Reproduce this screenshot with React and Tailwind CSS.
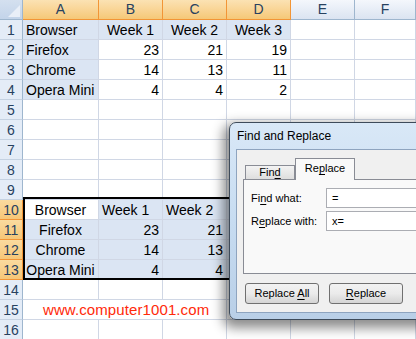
import React from 'react';

// columns A..F, widths live in the grid template below
const COLS = ['A', 'B', 'C', 'D', 'E', 'F'];
const SELECTED_COLS = ['A', 'B', 'C', 'D'];

// each cell: [text, align, highlighted]
const ROWS = [
  { n: 1, cells: [['Browser', 'l', 1], ['Week 1', 'c', 1], ['Week 2', 'c', 1], ['Week 3', 'c', 1]] },
  { n: 2, cells: [['Firefox', 'l', 1], ['23', 'r'], ['21', 'r'], ['19', 'r']] },
  { n: 3, cells: [['Chrome', 'l', 1], ['14', 'r'], ['13', 'r'], ['11', 'r']] },
  { n: 4, cells: [['Opera Mini', 'l', 1], ['4', 'r'], ['4', 'r'], ['2', 'r']] },
  { n: 5, cells: [] },
  { n: 6, cells: [] },
  { n: 7, cells: [] },
  { n: 8, cells: [] },
  { n: 9, cells: [] },
  { n: 10, sel: true, cells: [['Browser', 'c'], ['Week 1', 'l', 1], ['Week 2', 'l', 1], ['Week 3', 'l', 1]] },
  { n: 11, sel: true, cells: [['Firefox', 'c', 1], ['23', 'r', 1], ['21', 'r', 1], ['19', 'r', 1]] },
  { n: 12, sel: true, cells: [['Chrome', 'c', 1], ['14', 'r', 1], ['13', 'r', 1], ['11', 'r', 1]] },
  { n: 13, sel: true, cells: [['Opera Mini', 'c', 1], ['4', 'r', 1], ['4', 'r', 1], ['2', 'r', 1]] },
  { n: 14, cells: [] },
  { n: 15, url: true, cells: [] },
  { n: 16, cells: [] },
];

const alignClass = {
  l: 'justify-start',
  c: 'justify-center',
  r: 'justify-end',
};

const Cell = ({ text, align = 'l', hl }) => (
  <div
    className={`h-[20px] flex items-end px-[3px] pb-[1px] border-r border-b border-[#d0d7e5] text-[14px] leading-[16px] text-black whitespace-nowrap overflow-hidden ${alignClass[align]} ${hl ? 'bg-[#dbe5f3]' : 'bg-white'}`}
  >
    {text}
  </div>
);

const RowHeader = ({ n, sel }) => (
  <div
    className={`h-[20px] flex items-center justify-center border-r border-b text-[14px] leading-[16px] text-[#27415f] ${
      sel
        ? 'bg-gradient-to-b from-[#fadb9f] to-[#f6c677] border-[#f29536]'
        : 'bg-[#e4ecf7] border-r-[#9eb6ce] border-b-[#c5d2e2]'
    }`}
  >
    {n}
  </div>
);

const Sheet = () => (
  <div className="grid grid-cols-[23px_76px_64px_64px_64px_64px_1fr]">
    {/* corner */}
    <div className="h-[20px] relative bg-gradient-to-b from-[#d4e0ef] to-[#c3d4ea] border-r border-b border-[#9eb6ce]">
      <svg className="absolute right-[2px] bottom-[2px]" width="12" height="12" viewBox="0 0 12 12">
        <polygon points="12,0 12,12 0,12" fill="#e9eff8" />
      </svg>
    </div>
    {COLS.map((c) =>
      SELECTED_COLS.includes(c) ? (
        <div
          key={c}
          className="h-[20px] flex items-center justify-center bg-gradient-to-b from-[#fbe2b3] via-[#f9d596] to-[#f5c877] border-r border-b border-[#f29536] text-[14px] text-[#27415f]"
        >
          {c}
        </div>
      ) : (
        <div
          key={c}
          className="h-[20px] flex items-center justify-center bg-gradient-to-b from-[#f4f7fc] to-[#dbe4f1] border-r border-b border-[#9eb6ce] text-[14px] text-[#27415f]"
        >
          {c}
        </div>
      )
    )}

    {ROWS.map((row) => (
      <React.Fragment key={row.n}>
        <RowHeader n={row.n} sel={row.sel} />
        {row.url ? (
          <>
            <div className="col-span-3 h-[20px] flex items-end pl-[20px] pb-[1px] border-r border-b border-[#d0d7e5] bg-white text-[15px] leading-[16px] text-[#ff2a0a] whitespace-nowrap tracking-[0.1px]">
              www.computer1001.com
            </div>
            <Cell />
            <Cell />
            <Cell />
          </>
        ) : (
          COLS.map((c, i) => {
            const cell = row.cells[i];
            return cell ? (
              <Cell key={c} text={cell[0]} align={cell[1]} hl={cell[2]} />
            ) : (
              <Cell key={c} />
            );
          })
        )}
      </React.Fragment>
    ))}
  </div>
);

// mnemonic letter
const U = ({ children }) => <span className="underline underline-offset-[2px]">{children}</span>;

const FindReplaceDialog = () => (
  <div className="absolute left-[229px] top-[122px] w-[200px] h-[198px] flex flex-col rounded-l-[7px] border border-[#3e4b5a] bg-gradient-to-b from-[#d9e8f7] via-[#c7dcf1] to-[#b9cfe7] shadow-[-3px_5px_12px_3px_rgba(0,0,0,0.45)] text-black">
    <div className="h-[26px] flex items-center pl-[7px] text-[12px]">Find and Replace</div>
    <div className="flex-1 ml-[6px] mb-[6px] border border-r-0 border-[#8ea4bf] bg-[#f0f0f0] pt-[8px] pl-[6px] text-[11px]">
      {/* tabs */}
      <div className="flex items-end h-[22px] -mb-px">
        <div className="ml-[2px] mb-px w-[50px] h-[14px] flex items-center justify-center border border-b-0 border-[#898c95] bg-gradient-to-b from-[#f3f3f3] to-[#dedede]">
          <span>
            Fin<U>d</U>
          </span>
        </div>
        <div className="relative z-10 w-[60px] h-[22px] flex items-center justify-center border border-b-0 border-[#898c95] bg-[#f9f9f9] pb-[2px]">
          <span>
            Re<U>p</U>lace
          </span>
        </div>
      </div>
      {/* panel */}
      <div className="h-[95px] border border-r-0 border-[#898c95] bg-[#f9f9f9] pt-[8px] pl-[7px] flex flex-col gap-[3px]">
        <div className="flex items-center h-[20px]">
          <div className="w-[75px]">
            Fi<U>n</U>d what:
          </div>
          <div className="flex-1 h-[20px] flex items-center border border-r-0 border-[#abadb3] bg-white pl-[5px]">=</div>
        </div>
        <div className="flex items-center h-[20px]">
          <div className="w-[75px]">
            R<U>e</U>place with:
          </div>
          <div className="flex-1 h-[20px] flex items-center border border-r-0 border-[#abadb3] bg-white pl-[5px]">x=</div>
        </div>
      </div>
      {/* buttons */}
      <div className="flex gap-[10px] mt-[9px] pl-[2px]">
        <button className="w-[74px] h-[21px] rounded-[3px] border border-[#707070] bg-gradient-to-b from-[#f2f2f2] via-[#ebebeb] to-[#d4d4d4] flex items-center justify-center">
          <span>
            Replace <U>A</U>ll
          </span>
        </button>
        <button className="w-[74px] h-[21px] rounded-[3px] border border-[#707070] bg-gradient-to-b from-[#f2f2f2] via-[#ebebeb] to-[#d4d4d4] flex items-center justify-center">
          <span>
            <U>R</U>eplace
          </span>
        </button>
      </div>
    </div>
  </div>
);

const App = () => {
  return (
    <div className="relative w-[416px] h-[339px] overflow-hidden bg-white font-['Liberation_Sans',Arial,sans-serif]">
      <Sheet />
      {/* selection border A10:D13 */}
      <div className="absolute left-[23px] top-[197px] w-[269px] h-[83px] border-2 border-black pointer-events-none" />
      <FindReplaceDialog />
    </div>
  );
};

export default App;
